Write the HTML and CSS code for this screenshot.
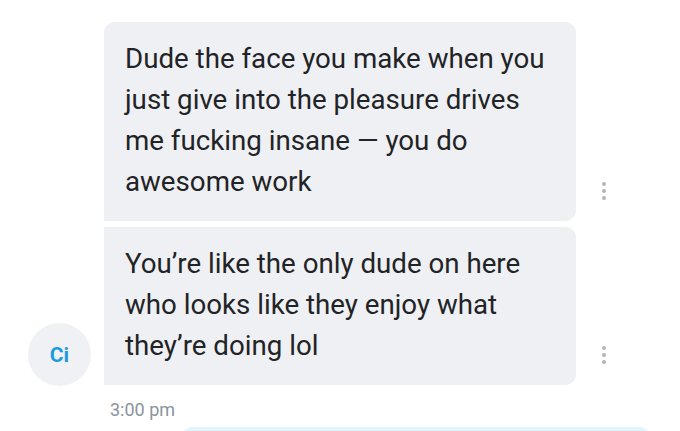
FILE: index.html
```html
<!DOCTYPE html>
<html>
<head>
<meta charset="utf-8">
<link rel="stylesheet" href="styles.css">
</head>
<body>
<div class="thread">
  <div class="group">
    <div class="bubble first">Dude the face you make when you just give into the pleasure drives me fucking insane — you do awesome work</div>
    <div class="more more-1"><span></span><span></span><span></span></div>
    <div class="avatar">Ci</div>
    <div class="bubble last">You’re like the only dude on here who looks like they enjoy what they’re doing lol</div>
    <div class="more more-2"><span></span><span></span><span></span></div>
    <div class="time">3:00 pm</div>
  </div>
  <div class="outgoing"></div>
</div>
</body>
</html>
```
FILE: styles.css
```css
html, body {
  margin: 0;
  padding: 0;
  background: #ffffff;
}
body {
  width: 680px;
  height: 431px;
  overflow: hidden;
  font-family: Roboto, "Noto Sans", sans-serif;
}
.thread {
  padding-top: 22px;
  display: flex;
  flex-direction: column;
}
.group {
  display: grid;
  grid-template-columns: 104px 472px 1fr;
  grid-template-rows: auto auto auto;
  row-gap: 6px;
}
.bubble {
  grid-column: 2;
  background: #eff0f3;
  color: #222326;
  font-size: 27.7px;
  line-height: 41px;
  padding: 16px 24px 19px 21px;
}
.bubble.first {
  grid-row: 1;
  border-radius: 11px 11px 11px 0;
}
.bubble.last {
  grid-row: 2;
  border-radius: 0 11px 11px 0;
}
.more {
  grid-column: 3;
  align-self: end;
  display: flex;
  flex-direction: column;
  gap: 3px;
  padding-left: 26px;
  padding-bottom: 21px;
}
.more-1 { grid-row: 1; }
.more-2 { grid-row: 2; }
.more span {
  display: block;
  width: 4px;
  height: 4px;
  border-radius: 50%;
  background: #b3b5b9;
}
.avatar {
  grid-column: 1;
  grid-row: 2;
  align-self: end;
  justify-self: start;
  margin-left: 28px;
  margin-bottom: -1px;
  width: 63px;
  height: 63px;
  border-radius: 50%;
  background: #eff1f4;
  color: #1d9be0;
  font-weight: 700;
  font-size: 21px;
  display: flex;
  align-items: center;
  justify-content: center;
}
.time {
  grid-column: 2;
  grid-row: 3;
  margin-top: 8px;
  padding-left: 6px;
  font-size: 18px;
  line-height: 21px;
  color: #8a949c;
}
.outgoing {
  margin-top: 7px;
  margin-left: 182px;
  width: 468px;
  height: 30px;
  background: #e1f5fc;
  border-radius: 11px 11px 0 0;
}
```
